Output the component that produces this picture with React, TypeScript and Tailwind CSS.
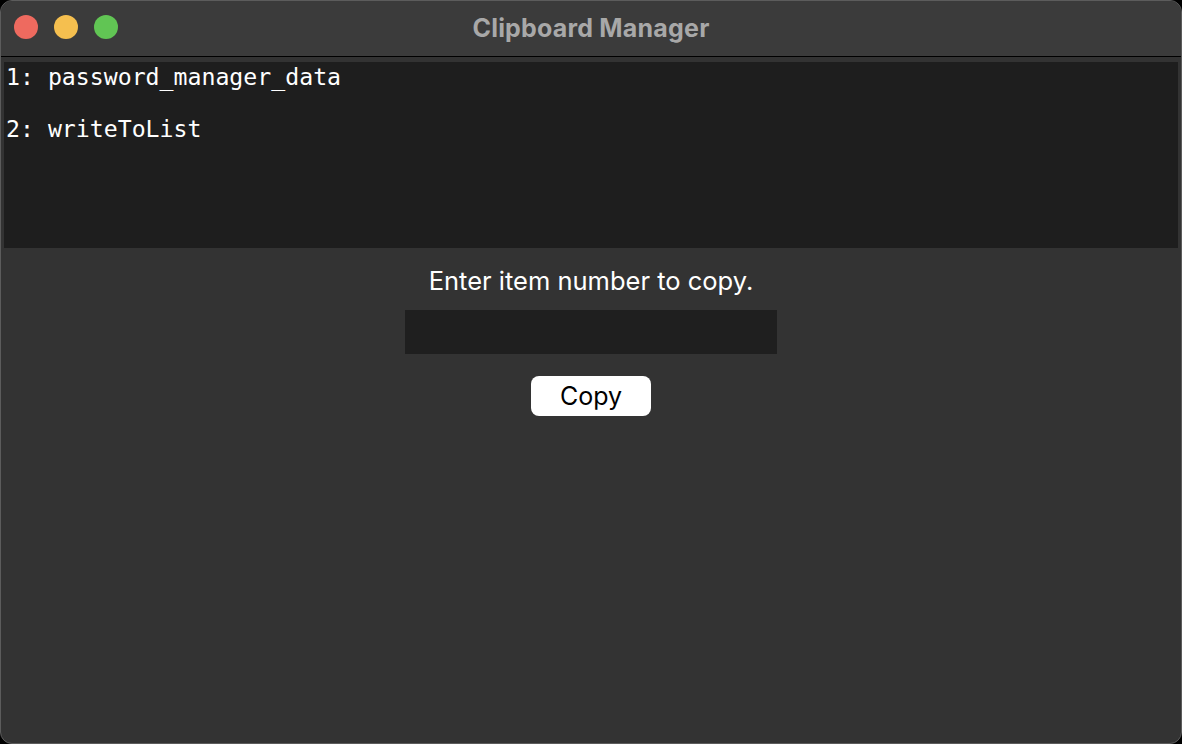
import { useState } from 'react';

const items = ['password_manager_data', 'writeToList'];

export default function App() {
  const [value, setValue] = useState('');

  return (
    <div className="w-[1182px] h-[744px] bg-black">
      <div className="w-full h-full rounded-[12px] border border-[#5c5c5c] bg-[#333333] overflow-hidden flex flex-col">
        {/* title bar */}
        <div className="relative h-[56px] shrink-0 bg-[#3b3b3b] border-b border-black flex items-center justify-center">
          <div className="absolute left-[13px] top-[14px] flex gap-[16px]">
            <span className="w-[24px] h-[24px] rounded-full bg-[#ee6a5f]" />
            <span className="w-[24px] h-[24px] rounded-full bg-[#f5bf4f]" />
            <span className="w-[24px] h-[24px] rounded-full bg-[#61c554]" />
          </div>
          <span className="text-[25px] font-bold text-[#a8a8a8] font-['Inter',sans-serif] tracking-[0.2px]">
            Clipboard Manager
          </span>
        </div>

        {/* list */}
        <div className="mx-[3px] mt-[5px] h-[186px] bg-[#1e1e1e] pt-[2px] font-['DejaVu_Sans_Mono',monospace] text-[23.2px] leading-[26px] text-white">
          {items.map((item, i) => (
            <div key={item} className="pl-[2px] h-[52px]">
              {i + 1}: {item}
            </div>
          ))}
        </div>

        {/* form */}
        <div className="flex flex-col items-center font-['Inter',sans-serif]">
          <p className="mt-[19px] text-[25.5px] leading-[28px] text-white">Enter item number to copy.</p>
          <input
            value={value}
            onChange={(e) => setValue(e.target.value)}
            className="mt-[15px] w-[372px] h-[44px] bg-[#1f1f1f] text-white outline-none px-2 text-[20px]"
          />
          <button className="mt-[22px] w-[120px] h-[40px] rounded-[8px] bg-white text-black text-[25px] leading-none">
            Copy
          </button>
        </div>
      </div>
    </div>
  );
}
